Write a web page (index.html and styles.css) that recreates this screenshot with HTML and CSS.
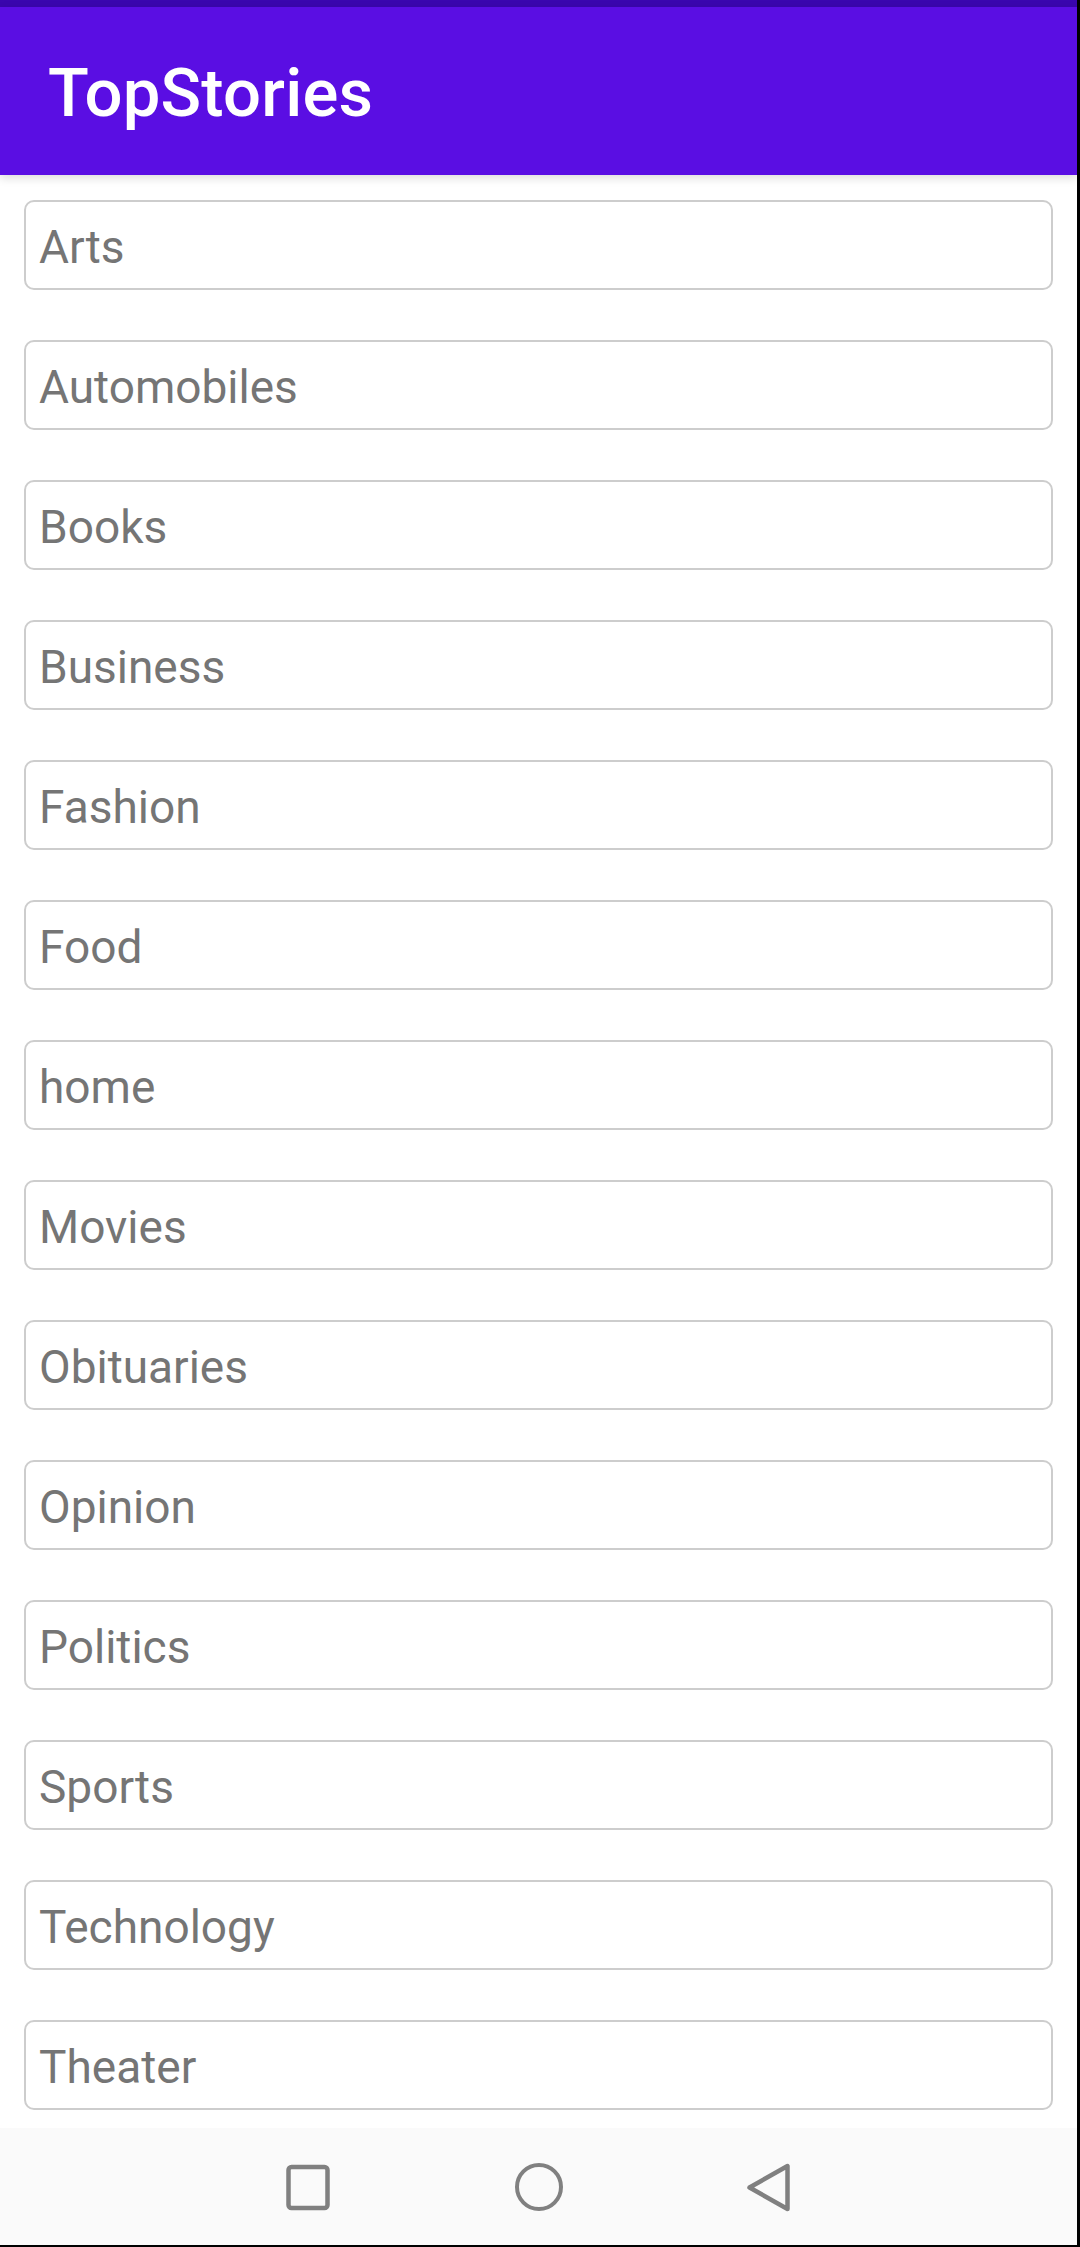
FILE: index.html
```html
<!DOCTYPE html>
<html lang="en">
<head>
<meta charset="utf-8">
<title>TopStories</title>
<link rel="stylesheet" href="styles.css">
</head>
<body>
<div class="screen">
  <div class="statusbar"></div>
  <header class="appbar"><h1 class="title">TopStories</h1></header>
  <main class="list">
    <div class="item">Arts</div>
    <div class="item">Automobiles</div>
    <div class="item">Books</div>
    <div class="item">Business</div>
    <div class="item">Fashion</div>
    <div class="item">Food</div>
    <div class="item">home</div>
    <div class="item">Movies</div>
    <div class="item">Obituaries</div>
    <div class="item">Opinion</div>
    <div class="item">Politics</div>
    <div class="item">Sports</div>
    <div class="item">Technology</div>
    <div class="item">Theater</div>
  </main>
  <nav class="navbar">
    <div class="navbtn nav-recent">
      <svg width="60" height="60" viewBox="0 0 60 60"><rect x="10.5" y="10" width="39" height="41" rx="3" fill="none" stroke="#808080" stroke-width="4.5"/></svg>
    </div>
    <div class="navbtn nav-home">
      <svg width="60" height="60" viewBox="0 0 60 60"><circle cx="30" cy="30" r="22" fill="none" stroke="#808080" stroke-width="4"/></svg>
    </div>
    <div class="navbtn nav-back">
      <svg width="60" height="60" viewBox="0 0 60 60"><path d="M49.5 9 L49.5 52 L11.5 30.5 Z" fill="none" stroke="#808080" stroke-width="4.5" stroke-linejoin="round"/></svg>
    </div>
  </nav>
</div>
</body>
</html>
```
FILE: styles.css
```css
html, body {
  margin: 0;
  padding: 0;
  background: #000;
}
body {
  width: 1080px;
  height: 2247px;
  overflow: hidden;
  font-family: Roboto, "Liberation Sans", Arial, sans-serif;
}
.screen {
  width: 1077px;
  height: 2245px;
  background: #ffffff;
  display: flex;
  flex-direction: column;
}
.statusbar {
  height: 7px;
  background: #3a06ae;
  flex: none;
}
.appbar {
  height: 168px;
  background: #5a0ee3;
  flex: none;
  display: flex;
  align-items: center;
  padding-left: 48px;
  box-shadow: 0 3px 9px rgba(0, 0, 0, 0.14);
  position: relative;
  z-index: 1;
}
.title {
  margin: 0;
  color: #ffffff;
  font-size: 67px;
  font-weight: 500;
  letter-spacing: 0.2px;
  line-height: 1;
  padding-top: 4px;
}
.list {
  flex: none;
  display: flex;
  flex-direction: column;
  gap: 50px;
  padding: 25px 24px 0 24px;
}
.item {
  height: 90px;
  box-sizing: border-box;
  border: 2.5px solid #cdcdcd;
  border-radius: 10px;
  display: flex;
  align-items: center;
  padding-left: 13px;
  padding-top: 3px;
  color: #757575;
  font-size: 46px;
  font-weight: 400;
}
.navbar {
  margin-top: 18px;
  height: 117px;
  background: #fafafa;
  flex: none;
  display: flex;
  align-items: center;
  padding-left: 278px;
}
.navbtn {
  width: 60px;
  height: 60px;
  display: flex;
}
.nav-home {
  margin-left: 171px;
}
.nav-back {
  margin-left: 169px;
}
```
